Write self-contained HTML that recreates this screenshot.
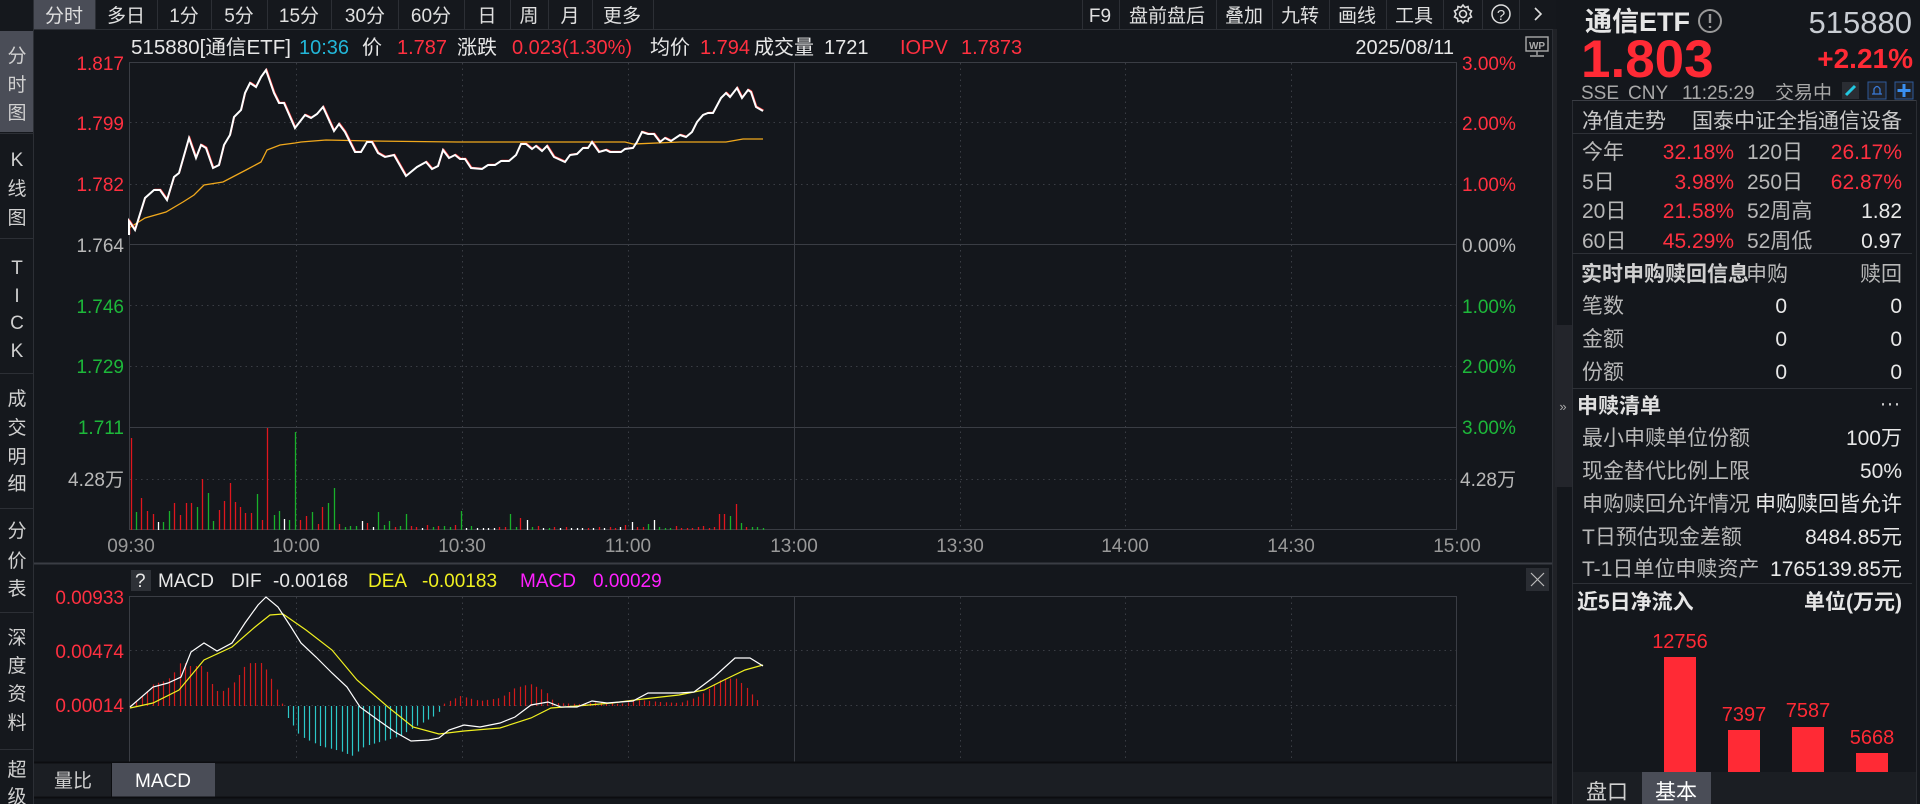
<!DOCTYPE html>
<html><head><meta charset="utf-8"><style>
html,body{margin:0;padding:0;background:#14171c;width:1920px;height:804px;overflow:hidden}
svg{display:block}
text{font-family:"Liberation Sans","Noto Sans CJK SC",sans-serif}
</style></head><body>
<svg id="s" width="1920" height="804" viewBox="0 0 1920 804" xmlns="http://www.w3.org/2000/svg">
<rect width="1920" height="804" fill="#14171c"/>
<rect x="0" y="0" width="1556" height="29" fill="#15181d"/>
<line x1="0" y1="29.5" x2="1556" y2="29.5" stroke="#2c2f35"/>
<rect x="34" y="0" width="61" height="29" fill="#4a4d57"/>
<g stroke="#2c2f35">
<line x1="33.5" y1="0" x2="33.5" y2="29"/><line x1="95.5" y1="0" x2="95.5" y2="29"/><line x1="157.5" y1="0" x2="157.5" y2="29"/><line x1="211.5" y1="0" x2="211.5" y2="29"/><line x1="267.5" y1="0" x2="267.5" y2="29"/><line x1="331.5" y1="0" x2="331.5" y2="29"/><line x1="398.5" y1="0" x2="398.5" y2="29"/><line x1="464.5" y1="0" x2="464.5" y2="29"/><line x1="510.5" y1="0" x2="510.5" y2="29"/><line x1="548.5" y1="0" x2="548.5" y2="29"/><line x1="592.5" y1="0" x2="592.5" y2="29"/><line x1="653.5" y1="0" x2="653.5" y2="29"/>
<line x1="1082.5" y1="0" x2="1082.5" y2="29"/><line x1="1119.5" y1="0" x2="1119.5" y2="29"/><line x1="1216.5" y1="0" x2="1216.5" y2="29"/><line x1="1272.5" y1="0" x2="1272.5" y2="29"/><line x1="1329.5" y1="0" x2="1329.5" y2="29"/><line x1="1386.5" y1="0" x2="1386.5" y2="29"/><line x1="1443.5" y1="0" x2="1443.5" y2="29"/><line x1="1482.5" y1="0" x2="1482.5" y2="29"/><line x1="1519.5" y1="0" x2="1519.5" y2="29"/>
</g>
<g font-size="19" fill="#e0e0e0" text-anchor="middle">
<text x="64" y="22">分时</text><text x="126" y="22">多日</text><text x="184" y="22">1分</text><text x="239" y="22">5分</text><text x="299" y="22">15分</text><text x="365" y="22">30分</text><text x="431" y="22">60分</text><text x="487" y="22">日</text><text x="529" y="22">周</text><text x="570" y="22">月</text><text x="622" y="22">更多</text>
<text x="1100" y="22">F9</text><text x="1167" y="22">盘前盘后</text><text x="1244" y="22">叠加</text><text x="1300" y="22">九转</text><text x="1357" y="22">画线</text><text x="1414" y="22">工具</text>
</g>
<g transform="translate(1463,14)" stroke="#ddd" stroke-width="1.6" fill="none">
<circle r="3.5"/><path d="M0,-9 L2,-6.5 L5,-7.5 L5.5,-4.5 L8.5,-3 L7,0 L8.5,3 L5.5,4.5 L5,7.5 L2,6.5 L0,9 L-2,6.5 L-5,7.5 L-5.5,4.5 L-8.5,3 L-7,0 L-8.5,-3 L-5.5,-4.5 L-5,-7.5 L-2,-6.5 Z"/>
</g>
<circle cx="1501" cy="14" r="9" stroke="#ddd" stroke-width="1.5" fill="none"/>
<text x="1501" y="20" font-size="15" fill="#ddd" text-anchor="middle">?</text>
<path d="M1535,8 L1541,14 L1535,20" stroke="#ddd" stroke-width="1.6" fill="none"/>

<rect x="0" y="29" width="33" height="775" fill="#15181d"/>
<line x1="33.5" y1="29" x2="33.5" y2="804" stroke="#2c2f35"/>
<rect x="0" y="31" width="33" height="101" fill="#4a4d57"/>
<g stroke="#2c2f35"><line x1="0" y1="133.5" x2="33" y2="133.5"/><line x1="0" y1="238.5" x2="33" y2="238.5"/><line x1="0" y1="373.5" x2="33" y2="373.5"/><line x1="0" y1="508.5" x2="33" y2="508.5"/><line x1="0" y1="612.5" x2="33" y2="612.5"/><line x1="0" y1="749.5" x2="33" y2="749.5"/></g>
<g font-size="19" fill="#d0d0d0" text-anchor="middle">
<text x="17" y="62">分</text><text x="17" y="91">时</text><text x="17" y="119">图</text>
<text x="17" y="166">K</text><text x="17" y="195">线</text><text x="17" y="224">图</text>
<text x="17" y="274">T</text><text x="17" y="302">I</text><text x="17" y="329">C</text><text x="17" y="357">K</text>
<text x="17" y="405">成</text><text x="17" y="434">交</text><text x="17" y="463">明</text><text x="17" y="490">细</text>
<text x="17" y="537">分</text><text x="17" y="567">价</text><text x="17" y="595">表</text>
<text x="17" y="644">深</text><text x="17" y="672">度</text><text x="17" y="700">资</text><text x="17" y="729">料</text>
<text x="17" y="776">超</text><text x="17" y="803">级</text>
</g>

<line x1="1552.5" y1="29" x2="1552.5" y2="804" stroke="#2c2f35"/>
<rect x="1553" y="29" width="4" height="775" fill="#202227"/>
<g font-size="20">
<text x="131" y="54" fill="#e8e8e8" textLength="160" lengthAdjust="spacingAndGlyphs">515880[通信ETF]</text>
<text x="299" y="54" fill="#22b6d8">10:36</text>
<text x="362" y="54" fill="#e8e8e8">价</text>
<text x="397" y="54" fill="#ff3040">1.787</text>
<text x="457" y="54" fill="#e8e8e8">涨跌</text>
<text x="512" y="54" fill="#ff3040">0.023(1.30%)</text>
<text x="650" y="54" fill="#e8e8e8">均价</text>
<text x="700" y="54" fill="#ff3040">1.794</text>
<text x="754" y="54" fill="#e8e8e8">成交量</text>
<text x="824" y="54" fill="#e8e8e8">1721</text>
<text x="900" y="54" fill="#ff3040">IOPV</text>
<text x="961" y="54" fill="#ff3040">1.7873</text>
<text x="1454" y="54" fill="#e8e8e8" text-anchor="end">2025/08/11</text>
</g>
<rect x="1526" y="37" width="22" height="14" fill="none" stroke="#aaa" stroke-width="1.4"/>
<text x="1537" y="49" font-size="10" font-weight="bold" fill="#aaa" text-anchor="middle">WP</text>
<path d="M1537,51 V55 M1530,56 H1544" stroke="#aaa" stroke-width="1.4"/>

<rect x="129.5" y="62.5" width="1327" height="467" fill="none" stroke="#3a3d44"/>
<g stroke="#3a3d44" stroke-dasharray="1.5,4">
<line x1="130" y1="122.5" x2="1457" y2="122.5"/><line x1="130" y1="184.5" x2="1457" y2="184.5"/><line x1="130" y1="305.5" x2="1457" y2="305.5"/><line x1="130" y1="366.5" x2="1457" y2="366.5"/><line x1="130" y1="479.5" x2="1457" y2="479.5"/>
<line x1="296.5" y1="63" x2="296.5" y2="529"/><line x1="462.5" y1="63" x2="462.5" y2="529"/><line x1="628.5" y1="63" x2="628.5" y2="529"/><line x1="960.5" y1="63" x2="960.5" y2="529"/><line x1="1125.5" y1="63" x2="1125.5" y2="529"/><line x1="1291.5" y1="63" x2="1291.5" y2="529"/>
</g>
<g stroke="#3a3d44"><line x1="130" y1="244.5" x2="1457" y2="244.5"/><line x1="130" y1="427.5" x2="1457" y2="427.5"/><line x1="794.5" y1="63" x2="794.5" y2="529"/></g>
<g font-size="19" text-anchor="end">
<text x="124" y="70" fill="#ff3040">1.817</text><text x="124" y="130" fill="#ff3040">1.799</text><text x="124" y="191" fill="#ff3040">1.782</text>
<text x="124" y="252" fill="#b8b8b8">1.764</text><text x="124" y="313" fill="#1db83a">1.746</text><text x="124" y="373" fill="#1db83a">1.729</text><text x="124" y="434" fill="#1db83a">1.711</text>
<text x="124" y="486" fill="#b8b8b8">4.28万</text>
</g>
<g font-size="19">
<text x="1462" y="70" fill="#ff3040">3.00%</text><text x="1462" y="130" fill="#ff3040">2.00%</text><text x="1462" y="191" fill="#ff3040">1.00%</text>
<text x="1462" y="252" fill="#b8b8b8">0.00%</text><text x="1462" y="313" fill="#1db83a">1.00%</text><text x="1462" y="373" fill="#1db83a">2.00%</text><text x="1462" y="434" fill="#1db83a">3.00%</text>
<text x="1460" y="486" fill="#b8b8b8">4.28万</text>
</g>
<g font-size="19" fill="#999" text-anchor="middle">
<text x="131" y="552">09:30</text><text x="296" y="552">10:00</text><text x="462" y="552">10:30</text><text x="628" y="552">11:00</text><text x="794" y="552">13:00</text><text x="960" y="552">13:30</text><text x="1125" y="552">14:00</text><text x="1291" y="552">14:30</text><text x="1457" y="552">15:00</text>
</g>
<polyline fill="none" stroke="#f0a81c" stroke-width="1.3" points="129,228 145,218 166,212 183,202 194,195 204,185 223,182 246,170 261,162 267,150 280,145 295,143 301,142 326,140 372,141 457,142 625,142 633,144 680,142 726,142 743,139 763,139"/>
<polyline fill="none" stroke="#ff4040" stroke-width="1" transform="translate(0.8,-0.8)" points="129,235 129,221 135,230 145,198 154,190 160,190 167,200 174,177 179,173 189,138 196,158 201,145 206,148 213,168 219,165 224,145 230,135 234,117 241,110 245,93 250,83 256,87 261,77 266,70 274,93 279,103 284,103 295,128 305,115 311,118 317,114 323,107 334,131 339,124 345,132 355,152 361,152 367,142 372,142 378,153 385,157 394,155 406,176 417,167 426,162 432,169 438,166 443,150 449,158 455,155 460,159 465,159 471,168 482,169 488,165 495,165 501,161 509,161 516,155 521,144 526,144 532,149 536,146 542,151 547,146 554,157 565,162 570,155 577,154 583,148 588,148 592,142 599,152 606,150 610,152 621,152 625,149 633,148 637,142 642,132 648,134 654,134 660,142 665,138 671,141 680,135 686,137 692,132 697,122 703,115 708,113 713,113 721,98 726,93 730,97 737,88 742,98 748,90 751,92 756,107 763,111"/>
<polyline fill="none" stroke="#ffffff" stroke-width="2" points="129,235 129,221 135,230 145,198 154,190 160,190 167,200 174,177 179,173 189,138 196,158 201,145 206,148 213,168 219,165 224,145 230,135 234,117 241,110 245,93 250,83 256,87 261,77 266,70 274,93 279,103 284,103 295,128 305,115 311,118 317,114 323,107 334,131 339,124 345,132 355,152 361,152 367,142 372,142 378,153 385,157 394,155 406,176 417,167 426,162 432,169 438,166 443,150 449,158 455,155 460,159 465,159 471,168 482,169 488,165 495,165 501,161 509,161 516,155 521,144 526,144 532,149 536,146 542,151 547,146 554,157 565,162 570,155 577,154 583,148 588,148 592,142 599,152 606,150 610,152 621,152 625,149 633,148 637,142 642,132 648,134 654,134 660,142 665,138 671,141 680,135 686,137 692,132 697,122 703,115 708,113 713,113 721,98 726,93 730,97 737,88 742,98 748,90 751,92 756,107 763,111"/>
<g id="vol" stroke-width="1.3"></g>

<line x1="34" y1="563.5" x2="1552" y2="563.5" stroke="#3a3d44" stroke-width="2"/>
<rect x="131" y="570" width="20" height="21" fill="#2e3137"/>
<g font-size="19">
<text x="135" y="587" fill="#e8e8e8">?</text>
<text x="158" y="587" fill="#e8e8e8">MACD</text><text x="231" y="587" fill="#e8e8e8">DIF</text><text x="273" y="587" fill="#e8e8e8">-0.00168</text>
<text x="368" y="587" fill="#f0f020">DEA</text><text x="422" y="587" fill="#f0f020">-0.00183</text>
<text x="520" y="587" fill="#ff20ff">MACD</text><text x="593" y="587" fill="#ff20ff">0.00029</text>
</g>
<rect x="1526" y="568" width="23" height="23" fill="#2a2d33"/>
<path d="M1531,573 L1544,586 M1544,573 L1531,586" stroke="#bbb" stroke-width="1.2"/>
<rect x="129.5" y="596.5" width="1327" height="166" fill="none" stroke="#3a3d44"/>
<g stroke="#3a3d44" stroke-dasharray="1.5,4">
<line x1="130" y1="650.5" x2="1457" y2="650.5"/><line x1="130" y1="705.5" x2="1457" y2="705.5"/>
<line x1="296.5" y1="597" x2="296.5" y2="762"/><line x1="462.5" y1="597" x2="462.5" y2="762"/><line x1="628.5" y1="597" x2="628.5" y2="762"/><line x1="960.5" y1="597" x2="960.5" y2="762"/><line x1="1125.5" y1="597" x2="1125.5" y2="762"/><line x1="1291.5" y1="597" x2="1291.5" y2="762"/>
</g>
<line x1="794.5" y1="597" x2="794.5" y2="762" stroke="#3a3d44"/>
<g font-size="19" fill="#ff3040" text-anchor="end">
<text x="124" y="604">0.00933</text><text x="124" y="658">0.00474</text><text x="124" y="712">0.00014</text>
</g>
<g id="hist" stroke-width="1.2"></g>
<polyline fill="none" stroke="#f0f020" stroke-width="1.2" points="130,708 153,703 179,690 204,660 232,647 255,627 270,615 283,614 306,630 332,650 357,680 388,707 413,727 439,734 464,731 500,728 531,718 551,708 577,706 612,703 643,699 679,695 704,690 724,680 745,670 763,665"/>
<polyline fill="none" stroke="#ffffff" stroke-width="1.2" points="130,707 153,687 168,683 181,677 191,652 204,643 217,651 232,643 245,623 258,605 266,597 278,607 291,627 301,643 316,657 332,673 347,687 360,707 378,720 395,732 411,741 429,740 439,738 449,730 464,725 480,727 500,723 515,717 531,705 548,702 561,707 577,707 592,701 607,703 633,701 648,693 679,693 694,692 714,677 735,658 750,658 763,666"/>
<rect x="34" y="763" width="1518" height="34" fill="#1b1e23"/>
<line x1="34" y1="762.5" x2="1552" y2="762.5" stroke="#0c0d10" stroke-width="2"/>
<rect x="112" y="763" width="103" height="34" fill="#4a4d57"/>
<line x1="111.5" y1="763" x2="111.5" y2="797" stroke="#0c0d10"/>
<line x1="34" y1="797.5" x2="1552" y2="797.5" stroke="#0c0d10" stroke-width="2"/>
<text x="73" y="787" font-size="19" fill="#d0d0d0" text-anchor="middle">量比</text>
<text x="163" y="787" font-size="19" fill="#ffffff" text-anchor="middle">MACD</text>

<rect x="1557" y="0" width="363" height="804" fill="#14171c"/>
<rect x="1555" y="325" width="17" height="162" fill="#23252b"/>
<text x="1563" y="411" font-size="13" fill="#aaa" text-anchor="middle">»</text>
<line x1="1572.5" y1="100" x2="1572.5" y2="804" stroke="#2a2d33"/>
<line x1="1916.5" y1="100" x2="1916.5" y2="804" stroke="#2a2d33"/>
<text x="1585" y="31" font-size="27" font-weight="bold" fill="#e6e6e6">通信ETF</text>
<circle cx="1710" cy="21" r="11" fill="none" stroke="#999" stroke-width="2"/>
<path d="M1710,14 V23 M1710,26 V28" stroke="#999" stroke-width="2.4"/>
<text x="1912" y="33" font-size="31" fill="#c8ccd2" text-anchor="end">515880</text>
<text x="1581" y="77" font-size="53" font-weight="bold" fill="#ff2a35">1.803</text>
<text x="1913" y="68" font-size="28" font-weight="bold" fill="#ff2a35" text-anchor="end">+2.21%</text>
<g font-size="19" fill="#a8a8a8"><text x="1581" y="99">SSE</text><text x="1628" y="99">CNY</text><text x="1682" y="99">11:25:29</text><text x="1775" y="99">交易中</text></g>
<rect x="1842" y="82" width="17" height="17" fill="#2a2d33"/>
<path d="M1846,95 L1855,86" stroke="#22c8e0" stroke-width="3"/>
<rect x="1868" y="82" width="18" height="17" fill="#20232a" stroke="#2e5a9a"/>
<path d="M1872,94 H1882 M1874,94 V89 Q1877,84 1880,89 V94" stroke="#3a7ad8" fill="none" stroke-width="1.3"/>
<rect x="1895" y="82" width="18" height="17" fill="#20232a" stroke="#2e5a9a"/>
<path d="M1904,84 V97 M1897.5,90.5 H1910.5" stroke="#3a8ff0" stroke-width="3"/>
<line x1="1572" y1="100.5" x2="1916" y2="100.5" stroke="#3a3d44"/>
<g font-size="21" fill="#c8c8c8">
<text x="1582" y="128">净值走势</text><text x="1902" y="128" text-anchor="end">国泰中证全指通信设备</text>
</g>
<line x1="1572" y1="133.5" x2="1912" y2="133.5" stroke="#2e3137"/>
<g font-size="21">
<text x="1582" y="159" fill="#b8b8b8">今年</text><text x="1734" y="159" fill="#ff3040" text-anchor="end">32.18%</text><text x="1747" y="159" fill="#b8b8b8">120日</text><text x="1902" y="159" fill="#ff3040" text-anchor="end">26.17%</text>
<text x="1582" y="189" fill="#b8b8b8">5日</text><text x="1734" y="189" fill="#ff3040" text-anchor="end">3.98%</text><text x="1747" y="189" fill="#b8b8b8">250日</text><text x="1902" y="189" fill="#ff3040" text-anchor="end">62.87%</text>
<text x="1582" y="218" fill="#b8b8b8">20日</text><text x="1734" y="218" fill="#ff3040" text-anchor="end">21.58%</text><text x="1747" y="218" fill="#b8b8b8">52周高</text><text x="1902" y="218" fill="#e8e8e8" text-anchor="end">1.82</text>
<text x="1582" y="248" fill="#b8b8b8">60日</text><text x="1734" y="248" fill="#ff3040" text-anchor="end">45.29%</text><text x="1747" y="248" fill="#b8b8b8">52周低</text><text x="1902" y="248" fill="#e8e8e8" text-anchor="end">0.97</text>
</g>
<line x1="1572" y1="253.5" x2="1912" y2="253.5" stroke="#2e3137"/>
<g font-size="21">
<text x="1581" y="281" fill="#d0d0d0" font-weight="bold">实时申购赎回信息</text><text x="1788" y="281" fill="#b8b8b8" text-anchor="end">申购</text><text x="1902" y="281" fill="#b8b8b8" text-anchor="end">赎回</text>
<text x="1582" y="313" fill="#b8b8b8">笔数</text><text x="1787" y="313" fill="#e8e8e8" text-anchor="end">0</text><text x="1902" y="313" fill="#e8e8e8" text-anchor="end">0</text>
<text x="1582" y="346" fill="#b8b8b8">金额</text><text x="1787" y="346" fill="#e8e8e8" text-anchor="end">0</text><text x="1902" y="346" fill="#e8e8e8" text-anchor="end">0</text>
<text x="1582" y="379" fill="#b8b8b8">份额</text><text x="1787" y="379" fill="#e8e8e8" text-anchor="end">0</text><text x="1902" y="379" fill="#e8e8e8" text-anchor="end">0</text>
</g>
<line x1="1572" y1="388.5" x2="1912" y2="388.5" stroke="#2e3137"/>
<g font-size="21">
<text x="1577" y="413" fill="#e0e0e0" font-weight="bold">申赎清单</text><text x="1890" y="410" fill="#ccc" text-anchor="middle">···</text>
<text x="1582" y="445" fill="#b8b8b8">最小申赎单位份额</text><text x="1902" y="445" fill="#e8e8e8" text-anchor="end">100万</text>
<text x="1582" y="478" fill="#b8b8b8">现金替代比例上限</text><text x="1902" y="478" fill="#e8e8e8" text-anchor="end">50%</text>
<text x="1582" y="511" fill="#b8b8b8">申购赎回允许情况</text><text x="1902" y="511" fill="#e8e8e8" text-anchor="end">申购赎回皆允许</text>
<text x="1582" y="544" fill="#b8b8b8">T日预估现金差额</text><text x="1902" y="544" fill="#e8e8e8" text-anchor="end">8484.85元</text>
<text x="1582" y="576" fill="#b8b8b8">T-1日单位申赎资产</text><text x="1902" y="576" fill="#e8e8e8" text-anchor="end">1765139.85元</text>
</g>
<line x1="1572" y1="583.5" x2="1912" y2="583.5" stroke="#2e3137"/>
<g font-size="21" font-weight="bold" fill="#e6e6e6">
<text x="1577" y="609">近5日净流入</text><text x="1902" y="609" text-anchor="end">单位(万元)</text>
</g>
<g fill="#ff2a35">
<rect x="1664" y="657" width="32" height="116"/><rect x="1728" y="730" width="32" height="43"/><rect x="1792" y="727" width="32" height="46"/><rect x="1856" y="753" width="32" height="20"/>
</g>
<g font-size="20" fill="#ff2a35" text-anchor="middle">
<text x="1680" y="648">12756</text><text x="1744" y="721">7397</text><text x="1808" y="717">7587</text><text x="1872" y="744">5668</text>
</g>
<rect x="1573" y="772" width="343" height="32" fill="#1b1e23"/>
<rect x="1642" y="772" width="69" height="32" fill="#4a4d57"/>
<text x="1607" y="799" font-size="21" fill="#d0d0d0" text-anchor="middle">盘口</text>
<text x="1676" y="799" font-size="21" fill="#ffffff" text-anchor="middle">基本</text>
</svg>
<script>
var NS="http://www.w3.org/2000/svg";
function ln(g,x,y1,y2,c){var l=document.createElementNS(NS,"line");l.setAttribute("x1",x);l.setAttribute("x2",x);l.setAttribute("y1",y1);l.setAttribute("y2",y2);l.setAttribute("stroke",c);g.appendChild(l);}
var vol=document.getElementById("vol");
var R="#e0161d",G="#19b02a",W="#ffffff";
var bars=[[131,438,R],[136,512,G],[141,498,R],[147,511,R],[153,514,R],[158,522,W],[163,522,G],[169,511,G],[174,503,R],[180,515,R],[186,503,R],[191,503,R],[197,507,G],[202,479,R],[208,493,G],[213,521,G],[219,510,R],[224,501,R],[230,483,R],[235,502,R],[240,507,R],[245,513,R],[251,513,R],[257,494,G],[262,520,R],[267,428,R],[274,515,G],[279,511,G],[284,519,W],[289,520,G],[295,432,G],[300,520,R],[306,516,R],[312,512,G],[318,524,R],[322,507,R],[328,503,G],[334,488,G],[339,524,R],[345,527,G],[350,526,G],[356,526,G],[362,521,W],[367,523,R],[373,527,W],[378,512,G],[384,525,G],[389,521,G],[395,527,R],[400,526,G],[406,514,G],[411,526,R],[416,527,R],[422,528,W],[427,525,R],[433,527,G],[438,526,R],[444,526,G],[450,527,G],[455,525,R],[461,511,G],[466,528,W],[471,526,G],[477,528,W],[483,528,W],[488,528,W],[494,528,W],[499,527,R],[505,527,R],[510,514,G],[516,527,G],[520,518,R],[527,520,W],[532,527,G],[538,526,R],[543,528,W],[549,528,G],[554,527,R],[560,528,W],[566,527,R],[571,528,W],[577,528,W],[582,528,W],[588,528,R],[593,528,W],[599,527,R],[604,528,W],[610,527,R],[615,528,R],[620,527,W],[625,525,R],[632,522,W],[637,527,R],[643,527,R],[648,524,G],[654,520,W],[659,527,G],[665,528,G],[670,528,G],[676,526,R],[681,528,R],[687,528,R],[692,528,R],[698,527,R],[703,526,R],[709,528,R],[714,527,R],[719,514,R],[724,514,R],[730,516,G],[736,504,R],[741,523,G],[746,527,R],[752,527,G],[757,527,G],[763,528,G]];
bars.forEach(function(b){ln(vol,b[0]+0.5,b[1],530,b[2]);});
var h=document.getElementById("hist");
function interp(pts,x){for(var i=0;i<pts.length-1;i++){if(x>=pts[i][0]&&x<=pts[i+1][0]){var t=(x-pts[i][0])/(pts[i+1][0]-pts[i][0]);return pts[i][1]+t*(pts[i+1][1]-pts[i][1]);}}return 0;}
var hp=[[130,0],[145,12],[153,22],[165,25],[172,30],[181,45],[190,40],[204,40],[212,22],[219,13],[228,18],[235,25],[245,40],[250,43],[262,43],[270,30],[279,12],[283,0],[286,-10],[290,-15],[300,-30],[320,-40],[340,-45],[352,-50],[365,-40],[380,-36],[400,-30],[420,-18],[438,-8],[441,0],[445,3],[460,10],[480,5],[500,8],[515,18],[530,22],[545,15],[555,3],[580,2],[600,4],[620,2],[640,6],[660,4],[680,3],[700,10],[720,26],[735,28],[745,20],[755,8],[762,2]];
for(var x=131;x<=763;x+=5.4){var v=interp(hp,x);if(Math.abs(v)<0.5)continue;if(v>0)ln(h,Math.round(x)+0.5,706-v,706,"#d01a1a");else ln(h,Math.round(x)+0.5,706,706-v,"#2cc8c8");}
</script>
</body></html>
